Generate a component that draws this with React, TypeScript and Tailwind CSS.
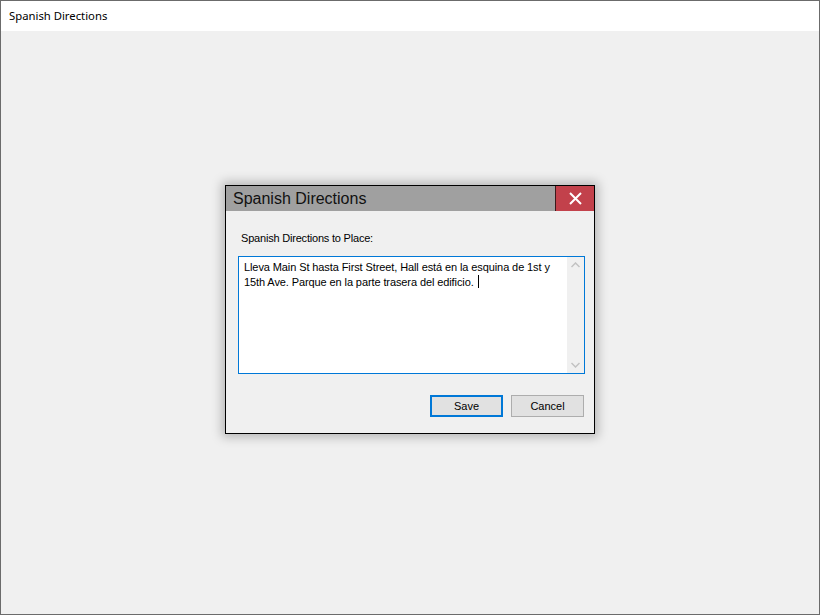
import React from "react";

export default function App() {
  const ms = { fontFamily: '"Liberation Sans", Arial, sans-serif' };
  return (
    <div className="w-[820px] h-[615px] flex flex-col border border-[#6b6b6b] bg-[#f0f0f0] overflow-hidden" style={ms}>
      <div className="h-[30px] shrink-0 bg-white flex items-center pl-[8px] text-[11.3px] text-black" style={{ fontFamily: '"Noto Sans", "Liberation Sans", sans-serif' }}>
        Spanish Directions
      </div>
      <div className="flex-1 flex justify-center pt-[154px]">
        <div className="w-[370px] h-[249px] border border-black bg-[#f0f0f0] flex flex-col shadow-[0_0_10px_3px_rgba(0,0,0,0.25)]">
          <div className="h-[25px] shrink-0 bg-[#a0a0a0] flex items-stretch">
            <div className="flex-1 flex items-center pl-[7px] text-[16px] text-[#111]">Spanish Directions</div>
            <div className="w-[39px] bg-[#c2414b] border-l border-[#3a1a1c] flex items-center justify-center">
              <svg width="13" height="13" viewBox="0 0 13 13">
                <path d="M1 1 L12 12 M12 1 L1 12" stroke="white" strokeWidth="2" />
              </svg>
            </div>
          </div>
          <div className="flex-1 flex flex-col pl-[12px] pr-[9px]">
            <div className="pl-[3px] pt-[20px] text-[11px] leading-[14px] tracking-[-0.2px] text-black">Spanish Directions to Place:</div>
            <div className="mt-[11px] h-[118px] border border-[#0078d7] bg-white flex">
              <div className="flex-1 pl-[5px] pt-[4px] text-[11px] leading-[13.5px] tracking-[-0.1px] text-black">
                Lleva Main St hasta First Street, Hall está en la esquina de 1st y 15th Ave. Parque en la parte trasera del edificio.
                <span className="inline-block w-[1px] h-[13px] bg-black align-[-2px] ml-[4px]" />
              </div>
              <div className="w-[17px] bg-[#f0f0f0] flex flex-col justify-between items-center py-[5px]">
                <svg width="9" height="6" viewBox="0 0 9 6"><path d="M0.5 5 L4.5 1 L8.5 5" stroke="#c2c2c2" strokeWidth="1.5" fill="none" /></svg>
                <svg width="9" height="6" viewBox="0 0 9 6"><path d="M0.5 1 L4.5 5 L8.5 1" stroke="#c2c2c2" strokeWidth="1.5" fill="none" /></svg>
              </div>
            </div>
            <div className="mt-[21px] pr-[1px] flex justify-end gap-[8px]">
              <div className="w-[73px] h-[22px] border-2 border-[#0078d7] bg-[#e1e1e1] flex items-center justify-center text-[11px] text-black">Save</div>
              <div className="w-[73px] h-[22px] border border-[#adadad] bg-[#e1e1e1] flex items-center justify-center text-[11px] text-black">Cancel</div>
            </div>
          </div>
        </div>
      </div>
    </div>
  );
}
